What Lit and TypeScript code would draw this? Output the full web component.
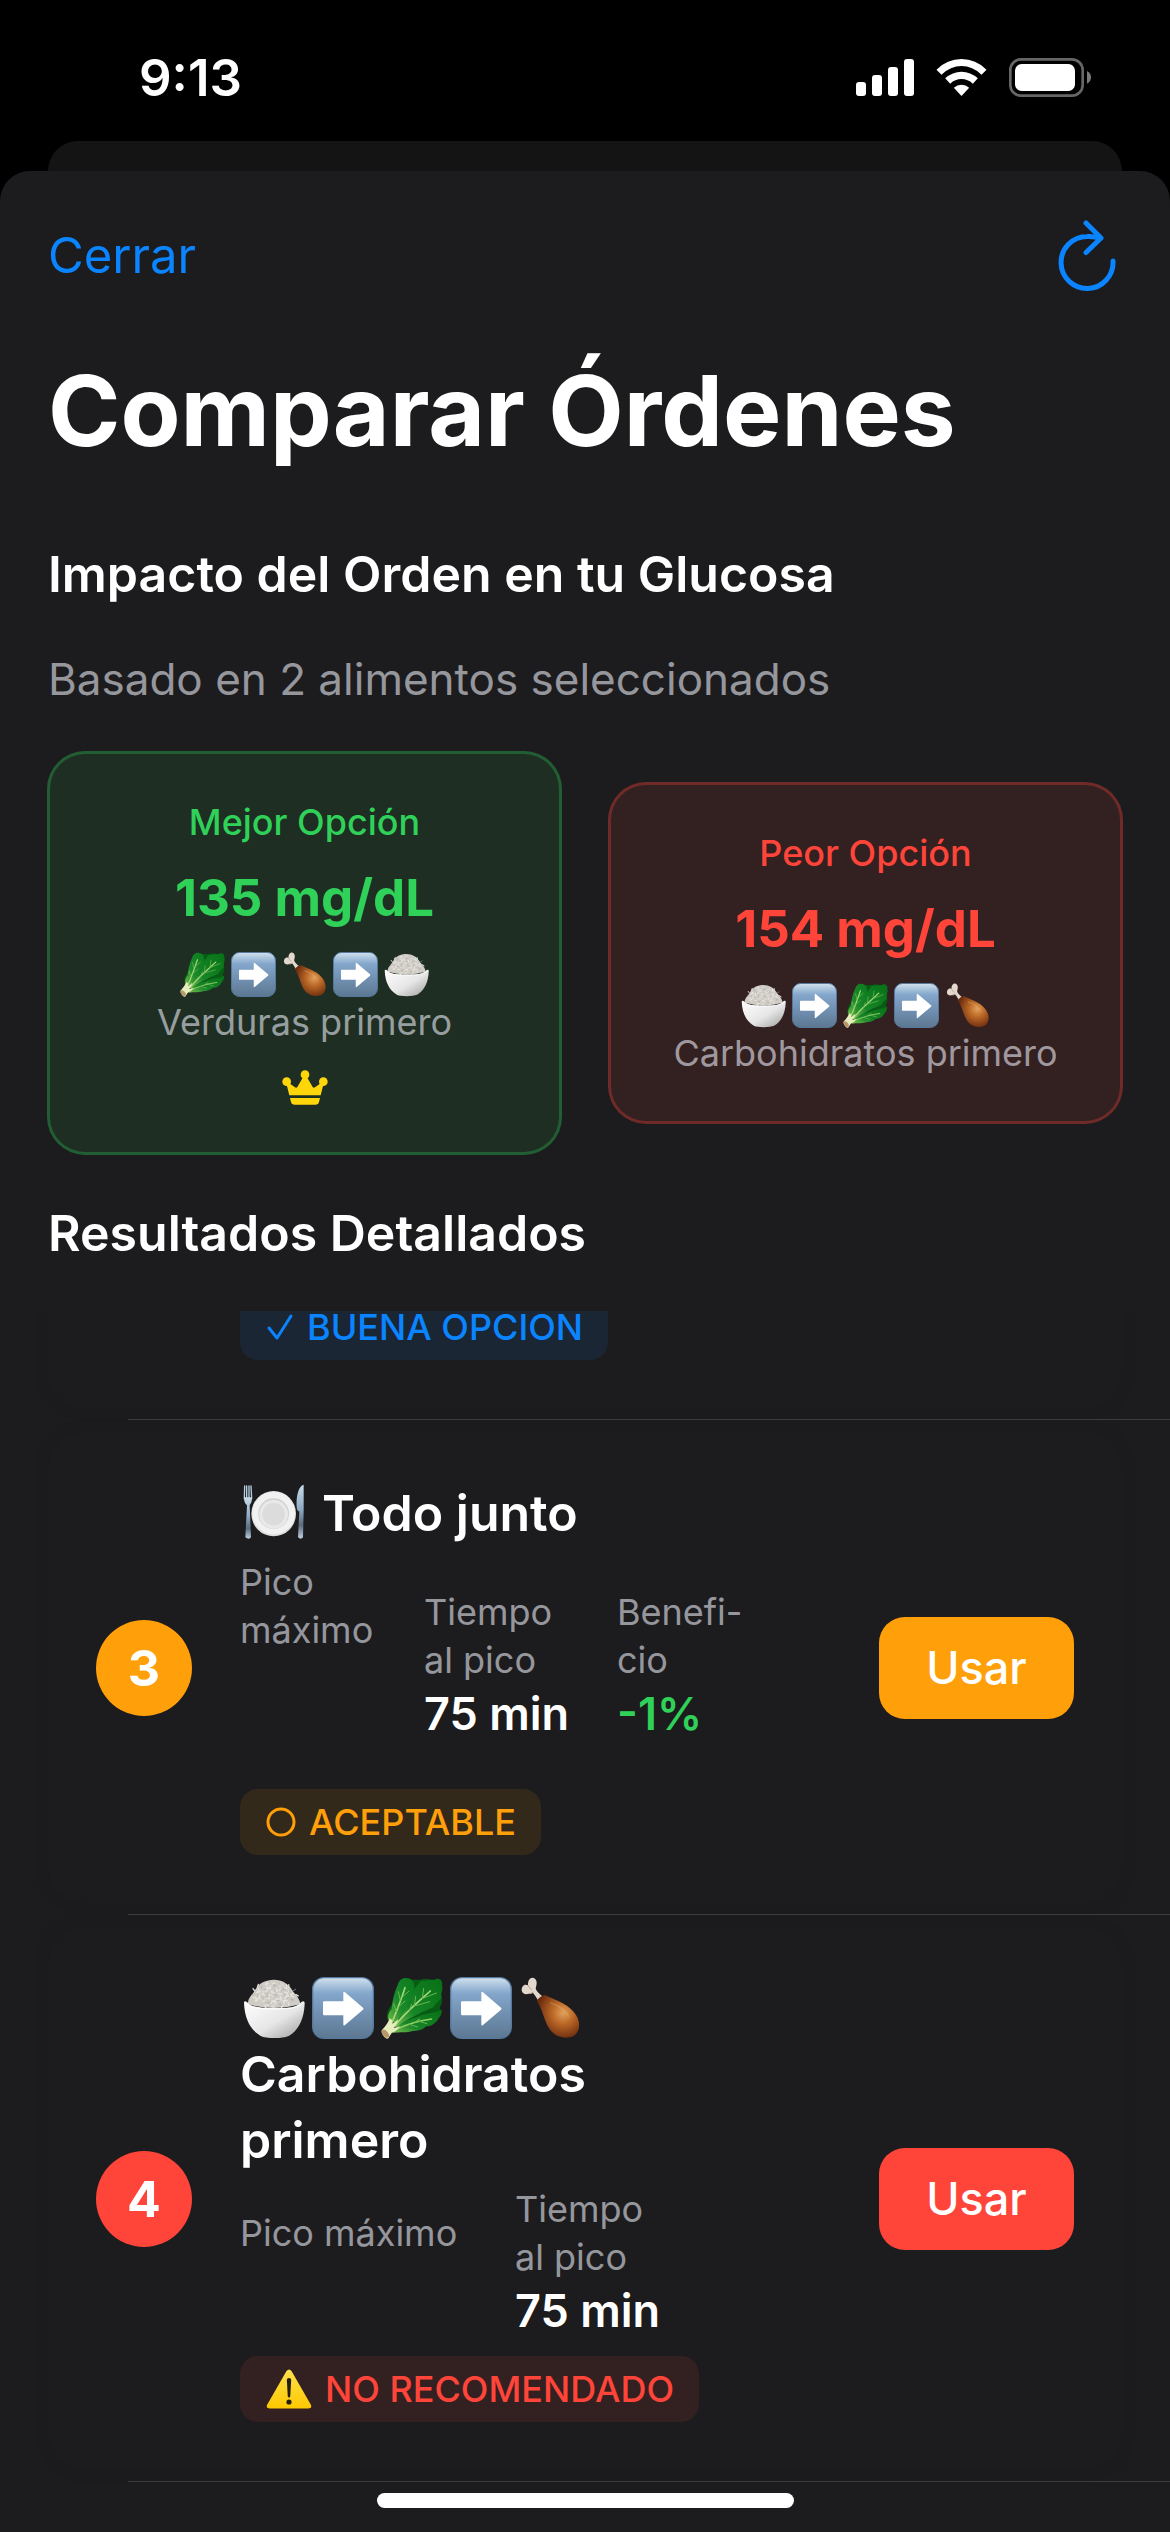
import { LitElement, html, svg, css, nothing, TemplateResult } from "lit";
import { customElement, property } from "lit/decorators.js";
import { classMap } from "lit/directives/class-map.js";

type Food = "rice" | "arrow" | "lettuce" | "chicken" | "plate";
type Tone = "best" | "good" | "fair" | "bad";

interface Metric {
  lines: string[];
  value?: string;
  gain?: boolean;
  blankLines?: number;
}

interface Result {
  rank: number;
  tone: Tone;
  icons: Food[];
  stacked: boolean;
  name: string[];
  metrics: Metric[];
  verdict: string;
}

const FOOD_NAMES: Record<Food, string> = {
  rice: "arroz",
  arrow: "luego",
  lettuce: "verdura",
  chicken: "proteína",
  plate: "plato",
};

/* Short strokes scattered over the mound of rice. */
const grains = Array.from({ length: 90 }, (_, i) => {
  const angle = i * 2.4;
  const reach = Math.sqrt(i / 90);
  const x = 93 + Math.cos(angle) * reach * 66;
  const y = 54 + Math.sin(angle) * reach * 38;
  const turn = i * 1.7;
  return `M${x.toFixed(1)} ${y.toFixed(1)}l${(Math.cos(turn) * 8).toFixed(1)} ${(Math.sin(turn) * 8).toFixed(1)}`;
});

const drawings: Record<Food, TemplateResult> = {
  rice: svg`
    <defs>
      <linearGradient id="bowl" x1="0" y1="0" x2="1" y2="1">
        <stop offset="0" stop-color="#ffffff" /><stop offset=".55" stop-color="#e6e6e6" /><stop offset="1" stop-color="#9b9b9b" />
      </linearGradient>
    </defs>
    <path fill="#cfccc6" d="M15 82C14 62 27 56 36 40C46 18 70 8 92 8C118 8 135 20 147 38C155 52 168 58 173 82Q94 104 15 82Z" />
    <path fill="none" stroke="#e6e3dd" stroke-width="4" stroke-linecap="round" d=${grains.filter((_, i) => i % 3 !== 0).join("")} />
    <path fill="none" stroke="#b0aca4" stroke-width="2" stroke-linecap="round" d=${grains.filter((_, i) => i % 3 === 0).join("")} />
    <path fill="url(#bowl)" d="M3 78Q3 70 12 75Q22 90 60 92Q94 94 130 92Q164 90 176 74Q186 70 185 80C183 128 166 160 137 177Q122 183 95 183Q66 183 53 177C22 158 5 126 3 78Z" />
    <path fill="none" stroke="#ffffff" stroke-width="3" d="M5 76Q20 93 60 95Q94 97 130 95Q166 92 183 76" />`,
  arrow: svg`
    <defs>
      <linearGradient id="tile" x1="0" y1="0" x2="0" y2="1">
        <stop offset="0" stop-color="#d3e2ee" /><stop offset=".12" stop-color="#abc5dd" /><stop offset=".26" stop-color="#83a6cb" />
        <stop offset=".6" stop-color="#7190b1" /><stop offset="1" stop-color="#5c7791" />
      </linearGradient>
    </defs>
    <rect x="2" y="2" width="182" height="182" rx="34" fill="url(#tile)" stroke="#56799f" stroke-width="4" />
    <path fill="#ffffff" d="M36 73H94V48Q94 42 99 46L153 92Q156 95 153 98L99 144Q94 148 94 142V115H36Q33 115 33 112V76Q33 73 36 73Z" />`,
  lettuce: svg`
    <defs>
      <linearGradient id="leaf-left" x1="0" y1="1" x2="1" y2="0">
        <stop offset="0" stop-color="#6db648" /><stop offset=".4" stop-color="#1b8a2b" /><stop offset="1" stop-color="#0a7a1d" />
      </linearGradient>
      <linearGradient id="leaf-right" x1="0" y1="1" x2="1" y2="0">
        <stop offset="0" stop-color="#7cc052" /><stop offset=".35" stop-color="#168527" /><stop offset="1" stop-color="#077016" />
      </linearGradient>
    </defs>
    <path fill="#075c14" d="M18 126C16 108 24 92 36 78L92 8L118 8Q140 2 150 10L182 60C186 74 180 84 176 94C184 104 178 118 168 126L110 150L40 150Z" />
    <path fill="url(#leaf-left)" d="M28 136C16 122 22 108 32 96C34 70 40 46 50 24C54 8 68 0 80 4C94 4 102 20 100 36C104 56 92 66 84 80C74 100 56 118 46 136Z" />
    <path fill="url(#leaf-right)" d="M40 148C58 118 74 96 88 74C92 54 98 34 112 22C116 10 126 10 134 12C146 4 158 12 164 6C176 2 186 10 183 24C188 38 178 46 182 60C174 74 164 78 158 90C140 100 124 102 112 112C90 122 66 134 50 152Z" />
    <path fill="url(#leaf-right)" d="M40 158C58 136 82 126 104 122C130 108 156 110 182 98C184 116 172 122 168 132C154 146 146 148 136 148C124 160 108 162 96 162C78 168 56 164 36 168Z" />
    <path fill="none" stroke="#a5d878" stroke-width="5" stroke-linecap="round" d="M34 134C46 104 60 70 72 32M42 146C70 110 108 78 148 42" />
    <path fill="none" stroke="#8fce66" stroke-width="4" stroke-linecap="round" d="M44 158C78 142 116 130 152 126" />
    <path fill="none" stroke="#69b650" stroke-width="3" stroke-linecap="round" d="M46 104L38 80M50 92L72 72M58 70L52 44M62 62L84 42M84 104L92 82M100 88L104 58M124 64L128 34M104 86L146 74M126 64L166 48M84 142L110 150M112 132L138 140M100 136L116 126" />
    <path fill="#e6edbd" d="M2 160Q20 142 26 124Q36 128 34 140Q42 136 52 126Q46 146 38 152Q50 152 58 148Q46 164 32 168L22 184Q18 188 10 180Q2 172 2 160Z" />
    <ellipse cx="13" cy="170" rx="8" ry="14" transform="rotate(-42 13 170)" fill="#b8966a" />`,
  chicken: svg`
    <defs>
      <radialGradient id="meat" cx=".62" cy=".42" r=".62">
        <stop offset="0" stop-color="#e0a05a" /><stop offset=".4" stop-color="#bd6a28" /><stop offset="1" stop-color="#6d2c0e" />
      </radialGradient>
    </defs>
    <path fill="#e3d8cd" d="M30 50C12 56 4 42 10 30C14 22 22 22 27 25C26 10 34 0 44 3C56 8 54 22 50 34Q50 42 72 60L60 74Q46 52 42 48Q36 50 30 50Z" />
    <path fill="none" stroke="#b5a494" stroke-width="3" stroke-linecap="round" d="M27 25Q30 34 38 38M30 50Q38 50 42 46" />
    <path fill="url(#meat)" d="M54 72Q60 58 78 54C104 68 142 78 164 104C188 132 184 164 164 177C140 188 112 180 96 162C76 138 74 104 54 72Z" />
    <path fill="none" stroke="#e9b87a" stroke-width="5" stroke-linecap="round" opacity=".3" d="M96 78C120 86 138 98 148 118" />`,
  plate: svg`
    <defs>
      <linearGradient id="steel" x1="0" y1="0" x2="0" y2="1">
        <stop offset="0" stop-color="#c9dbe9" /><stop offset=".45" stop-color="#8eabc5" /><stop offset=".75" stop-color="#5a6b7c" /><stop offset="1" stop-color="#bdd0e0" />
      </linearGradient>
    </defs>
    <path fill="none" stroke="#b9cfe0" stroke-width="4" stroke-linecap="round" d="M5 12L4 50M11 12V50M18 12V50M24 12L26 50" />
    <path fill="url(#steel)" d="M3 46H27Q28 62 20 70L24 166Q18 174 7 166L12 70Q2 62 3 46Z" />
    <path fill="url(#steel)" d="M161 74C159 44 166 12 182 8V86L180 166Q174 174 165 166L169 88Q162 88 161 74Z" />
    <ellipse cx="92" cy="95" rx="67" ry="68" fill="#dedede" />
    <ellipse cx="92" cy="93" rx="64" ry="64" fill="#f1f1f1" />
    <circle cx="92" cy="95" r="46" fill="#cfd2d5" />
    <circle cx="92" cy="97" r="43" fill="#e9e9e9" />
    <circle cx="92" cy="97" r="34" fill="#dcdcdc" />`,
};

@customElement("food-icon")
class FoodIcon extends LitElement {
  @property() name: Food = "rice";

  static styles = css`
    :host { display: block; width: var(--food-size, 62px); height: var(--food-size, 62px); flex: none; }
    .art { display: block; width: 100%; height: 100%; overflow: visible; }
  `;

  render() {
    return html`<svg class="art" viewBox="0 0 186 186" role="img" aria-label=${FOOD_NAMES[this.name]}>${drawings[this.name]}</svg>`;
  }
}

@customElement("option-card")
class OptionCard extends LitElement {
  @property() label = "";
  @property() value = "";
  @property() caption = "";
  @property({ attribute: false }) icons: Food[] = [];
  @property({ type: Boolean, reflect: true }) best = false;

  static styles = css`
    :host { display: block; --tone: 255, 69, 58; }
    :host([best]) { --tone: 48, 209, 88; }
    .card {
      display: flex; flex-direction: column; align-items: center; box-sizing: border-box;
      padding: 44px 24px; border: 3px solid rgba(var(--tone), 0.3); border-radius: 38px;
      background: rgba(var(--tone), 0.1);
    }
    .label { font-size: 36px; line-height: 48px; font-weight: 500; color: rgb(var(--tone)); }
    .value { margin: 20px 0; font-size: 51px; line-height: 64px; font-weight: 700; color: rgb(var(--tone)); }
    .icons { display: flex; align-items: center; gap: 6px; height: 48px; --food-size: 45px; }
    .caption { font-size: 36px; line-height: 48px; color: rgba(235, 235, 245, 0.6); }
    .crown { display: block; width: 46px; height: 38px; margin-top: 24px; }
  `;

  render() {
    return html`
      <section class="card">
        <div class="label">${this.label}</div>
        <div class="value">${this.value}</div>
        <div class="icons">${this.icons.map((n) => html`<food-icon name=${n}></food-icon>`)}</div>
        <div class="caption">${this.caption}</div>
        ${this.best
          ? html`<svg class="crown" viewBox="0 0 138 114" fill="#ffd60a" aria-hidden="true">
              <circle cx="69" cy="14" r="13" /><circle cx="14" cy="35" r="13" /><circle cx="124" cy="35" r="13" />
              <path d="M63 22H75L92 51Q95 55 99 52L116 40L124 44L116 76H22L14 44L22 40L39 52Q43 55 46 51Z" />
              <path d="M24 84H114L111 96Q109 104 100 104H38Q29 104 27 96Z" />
            </svg>`
          : nothing}
      </section>
    `;
  }
}

const marks: Record<Tone, TemplateResult | typeof nothing> = {
  best: nothing,
  good: html`<svg width="28" height="28" viewBox="0 0 28 28" fill="none" stroke="currentColor" stroke-width="3" stroke-linecap="round" stroke-linejoin="round" aria-hidden="true"><path d="M3 15L11 25L25 3" /></svg>`,
  fair: html`<svg width="30" height="30" viewBox="0 0 30 30" fill="none" stroke="currentColor" stroke-width="3" aria-hidden="true"><circle cx="15" cy="15" r="13" /></svg>`,
  bad: html`<svg width="46" height="40" viewBox="0 0 46 40" aria-hidden="true">
    <defs><linearGradient id="warn" x1="0" y1="0" x2="0" y2="1"><stop offset="0" stop-color="#ffe14d" /><stop offset="1" stop-color="#fdc800" /></linearGradient></defs>
    <path d="M20.500 2Q23 -1 25.500 2L45 36Q46 39.500 42 39.500H4Q0 39.500 1 36Z" fill="url(#warn)" />
    <path d="M20.800 11Q20.800 9 23 9T25.200 11L24.200 27.500Q24 28.500 23 28.500T21.800 27.500Z" fill="#231f10" />
    <circle cx="23" cy="33" r="2.600" fill="#231f10" />
  </svg>`,
};

@customElement("verdict-badge")
class VerdictBadge extends LitElement {
  @property() tone: Tone = "good";
  @property() text = "";

  static styles = css`
    :host { display: flex; }
    .badge { display: flex; align-items: center; box-sizing: border-box; gap: 13px; height: 66px; padding: 0 25px 0 26px; border-radius: 18px; font-size: 36px; line-height: 48px; font-weight: 500; white-space: nowrap; }
    .good { color: #0a84ff; background: rgba(10, 132, 255, 0.1); }
    .fair { color: #ff9f0a; background: rgba(255, 159, 10, 0.1); }
    .bad { color: #ff453a; background: rgba(255, 69, 58, 0.1); }
  `;

  render() {
    return html`<div class=${classMap({ badge: true, [this.tone]: true })}>${marks[this.tone]}<span>${this.text}</span></div>`;
  }
}

@customElement("result-row")
class ResultRow extends LitElement {
  @property({ attribute: false }) result!: Result;

  static styles = css`
    :host { display: block; }
    .card {
      display: flex; align-items: center; gap: 48px; padding: 48px; border-radius: 36px;
      background: #1c1c1e; box-shadow: 0 0 20px rgba(0, 0, 0, 0.05);
    }
    .rank { display: flex; align-items: center; justify-content: center; flex: none; width: 96px; height: 96px; border-radius: 50%; font-size: 50px; line-height: 66px; font-weight: 700; color: #fff; }
    .info { flex: 1; min-width: 0; display: flex; flex-direction: column; gap: 12px; }
    .title { display: flex; align-items: center; gap: 17px; margin: 0; font-size: 50px; line-height: 66px; font-weight: 600; color: #fff; }
    .title.stacked { flex-direction: column; align-items: flex-start; gap: 0; }
    .icons { display: flex; align-items: center; gap: 7px; height: 66px; padding-left: 3px; }
    .line { display: block; }
    .metrics { display: flex; align-items: center; gap: 48px; margin: 0; }
    .metric { display: flex; flex-direction: column; gap: 3px; min-width: 136px; white-space: nowrap; }
    .wide .metric:first-child { min-width: 227px; }
    .name { font-size: 36px; line-height: 48px; color: rgba(235, 235, 245, 0.6); }
    .value { margin: 0; padding-bottom: 6px; font-size: 45px; line-height: 54px; font-weight: 600; color: #fff; }
    .blank-1 { height: 54px; }
    .blank-2 { height: 114px; }
    .gain { color: #30d158; }
    .use { flex: none; min-width: 195px; height: 102px; padding: 0 45px; border: 0; border-radius: 26px; font: inherit; font-size: 45px; line-height: 60px; font-weight: 500; color: #fff; }
    .fair { background: #ff9f0a; }
    .bad { background: #ff453a; }
  `;

  render() {
    const r = this.result;
    return html`
      <article class="card">
        <div class=${classMap({ rank: true, [r.tone]: true })}>${r.rank}</div>
        <div class="info">
          <h3 class=${classMap({ title: true, stacked: r.stacked })}>
            <span class="icons">${r.icons.map((n) => html`<food-icon name=${n}></food-icon>`)}</span>
            <span>${r.name.map((l) => html`<span class="line">${l}</span>`)}</span>
          </h3>
          <dl class=${classMap({ metrics: true, wide: r.stacked })}>
            ${r.metrics.map(
              (m) => html`<div class="metric">
                <dt class="name">${m.lines.map((l) => html`<span class="line">${l}</span>`)}</dt>
                <dd class=${classMap({ value: true, gain: !!m.gain, "blank-1": m.blankLines === 1, "blank-2": m.blankLines === 2 })}>${m.value ?? nothing}</dd>
              </div>`
            )}
          </dl>
          <verdict-badge tone=${r.tone} text=${r.verdict}></verdict-badge>
        </div>
        <button class=${classMap({ use: true, [r.tone]: true })} type="button">Usar</button>
      </article>
    `;
  }
}

const results: Result[] = [
  {
    rank: 3,
    tone: "fair",
    icons: ["plate"],
    stacked: false,
    name: ["Todo junto"],
    metrics: [
      { lines: ["Pico", "máximo"], blankLines: 2 },
      { lines: ["Tiempo", "al pico"], value: "75 min" },
      { lines: ["Benefi-", "cio"], value: "-1%", gain: true },
    ],
    verdict: "ACEPTABLE",
  },
  {
    rank: 4,
    tone: "bad",
    icons: ["rice", "arrow", "lettuce", "arrow", "chicken"],
    stacked: true,
    name: ["Carbohidratos", "primero"],
    metrics: [
      { lines: ["Pico máximo"], blankLines: 1 },
      { lines: ["Tiempo", "al pico"], value: "75 min" },
    ],
    verdict: "NO RECOMENDADO",
  },
];

@customElement("app-root")
class AppRoot extends LitElement {
  static styles = css`
    :host {
      display: flex; flex-direction: column; position: relative; height: 100vh; overflow: hidden;
      background: #000; color: #fff; font-family: Inter, "Liberation Sans", sans-serif; -webkit-font-smoothing: antialiased;
    }
    .status { display: flex; align-items: center; justify-content: space-between; box-sizing: border-box; flex: none; height: 141px; padding: 14px 79px 0 139px; }
    .time { font-size: 51px; line-height: 66px; font-weight: 600; }
    .signals { display: flex; align-items: center; gap: 22px; }
    .behind { flex: none; height: 30px; margin: 0 48px; border-radius: 30px 30px 0 0; background: #141414; }
    .sheet { flex: 1; min-height: 0; display: flex; flex-direction: column; border-radius: 30px 30px 0 0; background: #1c1c1e; }
    .nav { display: flex; align-items: center; justify-content: space-between; height: 76px; padding: 47px 51px 0 48px; }
    .nav button { display: block; padding: 0; border: 0; background: none; font: inherit; font-size: 49px; line-height: 66px; color: #0a84ff; }
    .refresh { display: block; }
    .heading { margin: 55px 48px 0; font-size: 98px; line-height: 124px; font-weight: 700; }
    .section { margin: 0 48px; font-size: 50px; line-height: 66px; font-weight: 600; }
    .impact { margin-top: 68px; }
    .basis { margin: 45px 48px; font-size: 44px; line-height: 54px; color: rgba(235, 235, 245, 0.6); }
    .options { display: grid; grid-template-columns: 1fr 1fr; align-items: center; gap: 46px; margin: 0 47px 45px; }
    .list { flex: 1; min-height: 0; overflow: hidden; list-style: none; margin: 45px 0 0; padding: 0; }
    .item { padding: 12px 48px 11px; }
    .divider { height: 1px; margin-left: 128px; background: #3d3d41; }
    .scrolled { margin-top: -77px; }
    .stub { padding: 48px 48px 48px 192px; border-radius: 36px; box-shadow: 0 0 20px rgba(0, 0, 0, 0.05); }
    .home { position: absolute; left: 50%; bottom: 24px; width: 417px; height: 15px; margin-left: -208px; border-radius: 8px; background: #fff; }
  `;

  render() {
    return html`
      <header class="status">
        <span class="time">9:13</span>
        <span class="signals">
          <svg width="58" height="37" viewBox="0 0 174 111" fill="#fff" role="img" aria-label="Cobertura">
            <rect x="0" y="69" width="30" height="42" rx="9" /><rect x="48" y="48" width="30" height="63" rx="9" />
            <rect x="96" y="24" width="30" height="87" rx="9" /><rect x="144" y="0" width="30" height="111" rx="9" />
          </svg>
          <svg width="51" height="37" viewBox="0 0 150 111" fill="#fff" role="img" aria-label="Wi-Fi">
            <path d="M0 32Q32 0 75 0T150 32L135 47Q108 21 75 21T15 47Z" />
            <path d="M26 58Q48 38 75 38T124 58L109 74Q94 60 75 60T41 74Z" />
            <path d="M52 86Q62 77 75 77T98 86L75 111Z" />
          </svg>
          <svg width="82" height="39" viewBox="0 0 246 117" role="img" aria-label="Batería">
            <rect x="4" y="4" width="217" height="109" rx="32" fill="none" stroke="#666" stroke-width="8" />
            <rect x="18" y="18" width="180" height="81" rx="20" fill="#fff" />
            <path d="M234 39Q246 45 246 58T234 77Z" fill="#7a7a7a" />
          </svg>
        </span>
      </header>
      <div class="behind"></div>
      <main class="sheet">
        <nav class="nav">
          <button type="button">Cerrar</button>
          <button type="button" aria-label="Actualizar">
            <svg class="refresh" width="64" height="76" viewBox="0 0 64 76" fill="none" stroke="currentColor" stroke-width="5" stroke-linecap="round" stroke-linejoin="round">
              <path d="M58 43A26 26 0 1 1 32 18.500Q38 18 45 20" /><path d="M31 5L46 20L31 34.500" />
            </svg>
          </button>
        </nav>
        <h1 class="heading">Comparar Órdenes</h1>
        <h2 class="section impact">Impacto del Orden en tu Glucosa</h2>
        <p class="basis">Basado en 2 alimentos seleccionados</p>
        <div class="options">
          <option-card best label="Mejor Opción" value="135 mg/dL" caption="Verduras primero"
            .icons=${["lettuce", "arrow", "chicken", "arrow", "rice"] as Food[]}></option-card>
          <option-card label="Peor Opción" value="154 mg/dL" caption="Carbohidratos primero"
            .icons=${["rice", "arrow", "lettuce", "arrow", "chicken"] as Food[]}></option-card>
        </div>
        <h2 class="section">Resultados Detallados</h2>
        <ul class="list">
          <li class="item scrolled"><div class="stub"><verdict-badge tone="good" text="BUENA OPCION"></verdict-badge></div></li>
          ${results.map(
            (r) => html`<li><div class="divider"></div><div class="item"><result-row .result=${r}></result-row></div></li>`
          )}
          <li class="divider"></li>
        </ul>
      </main>
      <div class="home"></div>
    `;
  }
}
